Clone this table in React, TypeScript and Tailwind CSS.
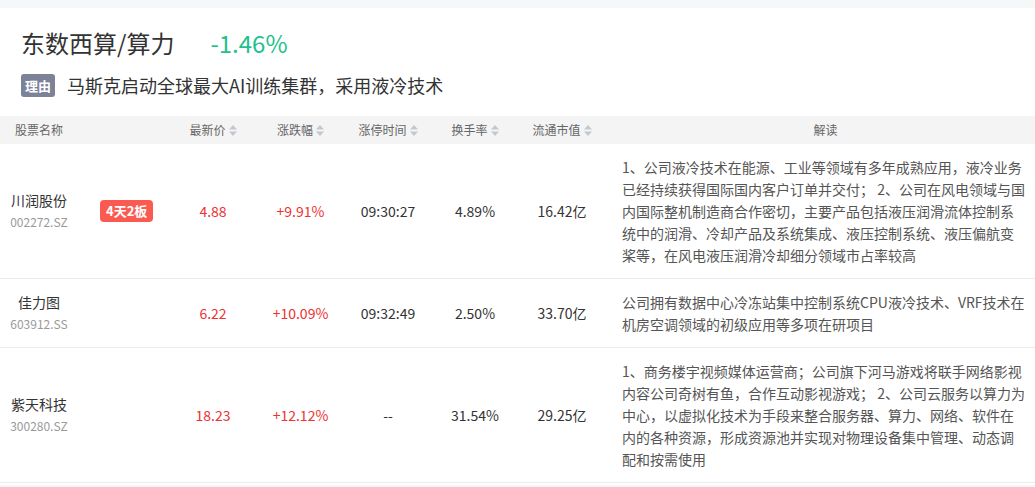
import React from 'react';

interface StockRow {
  name: string;
  code: string;
  tag?: string;
  price: string;
  change: string;
  limitTime: string;
  turnover: string;
  marketCap: string;
  note: string;
}

const rows: StockRow[] = [
  {
    name: '川润股份',
    code: '002272.SZ',
    tag: '4天2板',
    price: '4.88',
    change: '+9.91%',
    limitTime: '09:30:27',
    turnover: '4.89%',
    marketCap: '16.42亿',
    note: '1、公司液冷技术在能源、工业等领域有多年成熟应用，液冷业务已经持续获得国际国内客户订单并交付； 2、公司在风电领域与国内国际整机制造商合作密切，主要产品包括液压润滑流体控制系统中的润滑、冷却产品及系统集成、液压控制系统、液压偏航变桨等，在风电液压润滑冷却细分领域市占率较高',
  },
  {
    name: '佳力图',
    code: '603912.SS',
    price: '6.22',
    change: '+10.09%',
    limitTime: '09:32:49',
    turnover: '2.50%',
    marketCap: '33.70亿',
    note: '公司拥有数据中心冷冻站集中控制系统CPU液冷技术、VRF技术在机房空调领域的初级应用等多项在研项目',
  },
  {
    name: '紫天科技',
    code: '300280.SZ',
    price: '18.23',
    change: '+12.12%',
    limitTime: '--',
    turnover: '31.54%',
    marketCap: '29.25亿',
    note: '1、商务楼宇视频媒体运营商；公司旗下河马游戏将联手网络影视内容公司奇树有鱼，合作互动影视游戏； 2、公司云服务以算力为中心，以虚拟化技术为手段来整合服务器、算力、网络、软件在内的各种资源，形成资源池并实现对物理设备集中管理、动态调配和按需使用',
  },
];

const cols = 'grid grid-cols-[169px_88px_87px_88px_86px_88px_1fr]';

const SortIcon = () => (
  <svg width="8" height="11" viewBox="0 0 8 11" className="ml-[3px]">
    <path d="M4 0 L8 4.5 H0 Z" fill="#c4c7cc" />
    <path d="M4 11 L8 6.5 H0 Z" fill="#c4c7cc" />
  </svg>
);

const HeadCell = ({ label }: { label: string }) => (
  <div className="flex items-center justify-center">
    <span>{label}</span>
    <SortIcon />
  </div>
);

export default function App() {
  return (
    <div
      className="min-h-screen bg-[#f6f7f9] pt-2"
      style={{ fontFamily: '"Noto Sans CJK SC", "Noto Sans", sans-serif' }}
    >
      <div className="bg-white">
        {/* 标题 */}
        <div className="flex items-center px-[21px] pt-[19px]">
          <h1 className="text-[24px] leading-8 text-[#333]">东数西算/算力</h1>
          <span className="ml-[36px] text-[24px] leading-8 text-[#1fbf8e]">-1.46%</span>
        </div>
        <div className="flex items-center px-[21px] mt-[14px]">
          <span className="rounded-[3px] bg-[#7c8399] px-[4px] h-[23px] leading-[23px] text-[13px] font-bold text-white">
            理由
          </span>
          <span className="ml-3 text-[18px] leading-6 text-[#333]">
            马斯克启动全球最大AI训练集群，采用液冷技术
          </span>
        </div>

        {/* 表格 */}
        <div className="mt-[19px]">
          <div className={`${cols} h-7 bg-[#f4f4f4] text-[12px] text-[#666] items-center`}>
            <div className="pl-[15px]">股票名称</div>
            <HeadCell label="最新价" />
            <HeadCell label="涨跌幅" />
            <HeadCell label="涨停时间" />
            <HeadCell label="换手率" />
            <HeadCell label="流通市值" />
            <div className="text-center pl-[10px]">解读</div>
          </div>

          {rows.map((r) => (
            <div
              key={r.code}
              className={`${cols} items-center border-b border-[#ebebeb] text-[14px] text-[#333]`}
            >
              <div className="flex items-center pl-[11px]">
                <div className="flex w-[56px] flex-col items-center">
                  <span className="leading-[22px]">{r.name}</span>
                  <span className="text-[12px] leading-[22px] text-[#999]">{r.code}</span>
                </div>
                {r.tag && (
                  <span className="ml-[33px] rounded-[4px] bg-[#fa5a50] px-[6px] h-[22px] leading-[22px] text-[13px] font-bold text-white">
                    {r.tag}
                  </span>
                )}
              </div>
              <div className="text-center text-[#ec3232]">{r.price}</div>
              <div className="text-center text-[#ec3232]">{r.change}</div>
              <div className="text-center">{r.limitTime}</div>
              <div className="text-center">{r.turnover}</div>
              <div className="text-center">{r.marketCap}</div>
              <div className="py-3 pl-4">
                <p className="w-[404px] leading-[22px] text-[#555]">{r.note}</p>
              </div>
            </div>
          ))}
        </div>
        <div className="h-[2px]" />
      </div>
    </div>
  );
}
